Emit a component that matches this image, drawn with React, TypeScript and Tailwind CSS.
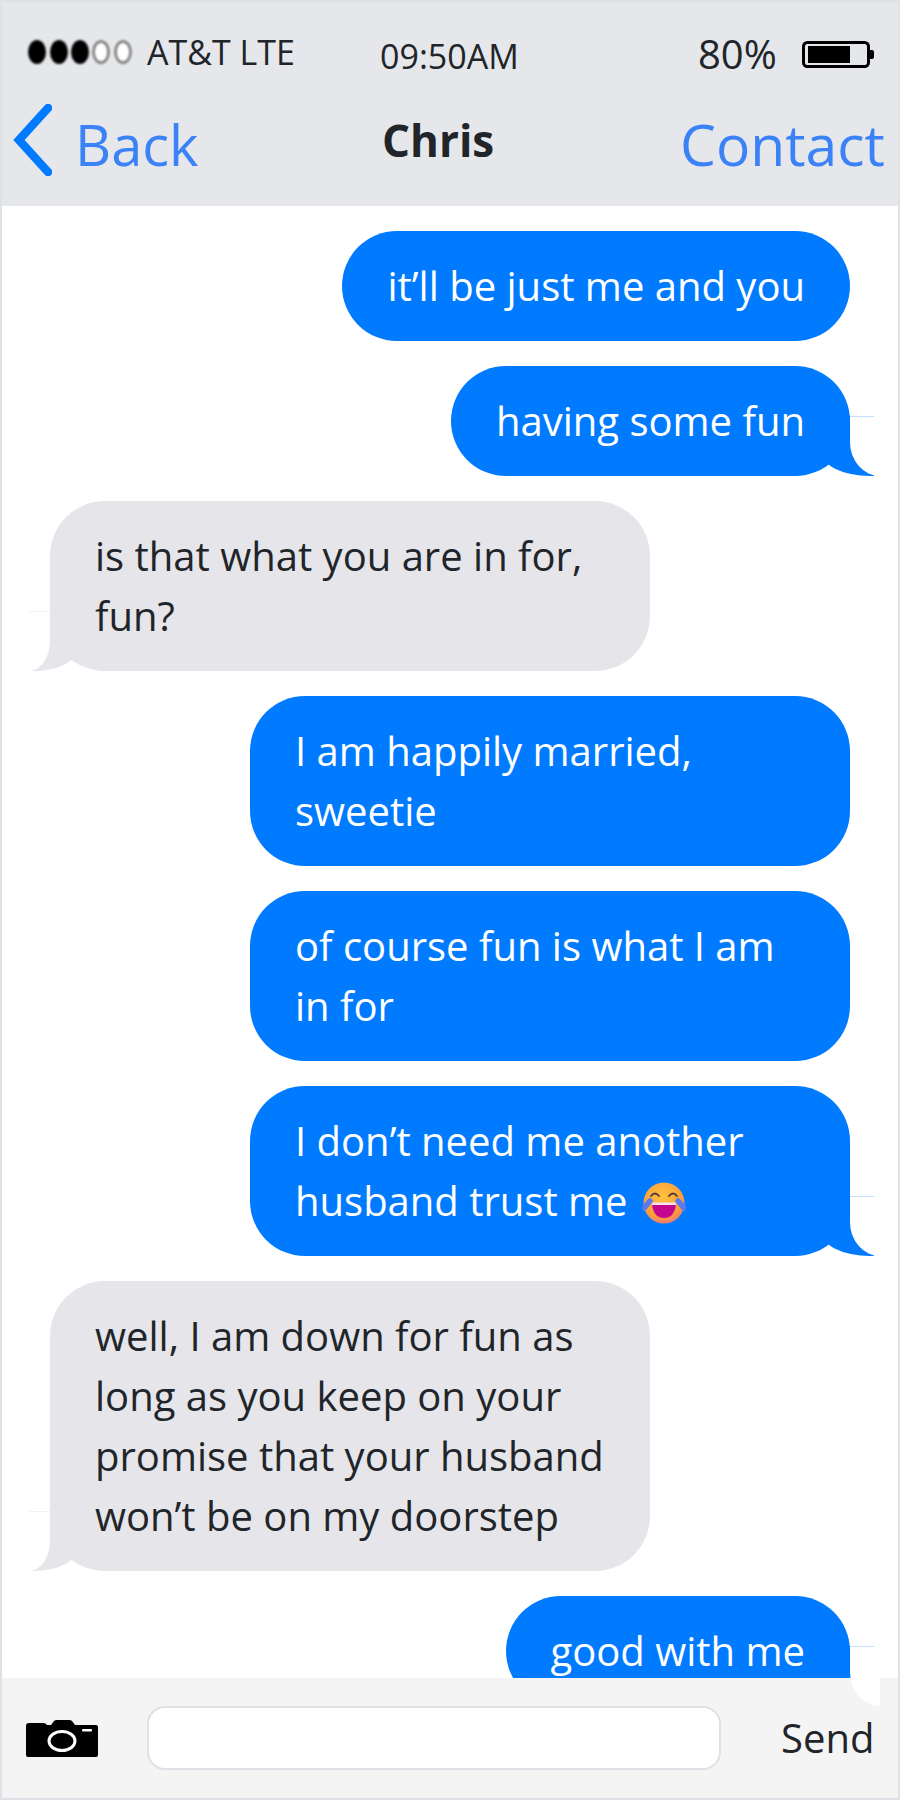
const messages = [
  { from: 'me', text: 'it’ll be just me and you' },
  { from: 'me', text: 'having some fun', tail: true },
  { from: 'them', text: 'is that what you are in for, fun?', tail: true },
  { from: 'me', text: 'I am happily married, sweetie' },
  { from: 'me', text: 'of course fun is what I am in for' },
  { from: 'me', text: 'I don’t need me another husband trust me', emoji: true, tail: true },
  { from: 'them', text: 'well, I am down for fun as long as you keep on your promise that your husband won’t be on my doorstep', tail: true },
  { from: 'me', text: 'good with me', tail: true },
];

function LaughEmoji() {
  return (
    <svg viewBox="0 0 44 42" className="inline-block w-[44px] h-[42px] ml-[14px] align-[-8px]">
      <defs>
        <radialGradient id="face" cx="45%" cy="35%" r="70%">
          <stop offset="0%" stopColor="#fdc33f" />
          <stop offset="70%" stopColor="#f9a03a" />
          <stop offset="100%" stopColor="#f2717f" />
        </radialGradient>
      </defs>
      <circle cx="22" cy="21" r="20.5" fill="url(#face)" />
      <path d="M9 14 q4 -5 8 0 M27 14 q4 -5 8 0" fill="none" stroke="#5b3a3a" strokeWidth="2" strokeLinecap="round" />
      <path d="M10 21 H34 Q33 36 22 36 Q11 36 10 21Z" fill="#c4068f" />
      <path d="M10 20.5 H34 V23 H10Z" fill="#f7e3ef" />
      <path d="M8 19 L2 26" stroke="#5b78ee" strokeWidth="5.5" strokeLinecap="round" />
      <path d="M36 19 L42 26" stroke="#5b78ee" strokeWidth="5.5" strokeLinecap="round" />
    </svg>
  );
}

function Bubble({ from, text, emoji, tail }: { from: string; text: string; emoji?: boolean; tail?: boolean }) {
  const me = from === 'me';
  return (
    <div
      className={`relative max-w-[600px] rounded-[55px] px-[45px] py-[25px] text-[40px] leading-[60px] ${
        me ? 'self-end bg-[#007bff] text-white' : 'self-start bg-[#e5e5ea] text-[#212529]'
      }`}
    >
      <span className="relative z-[1]">
        {text}
        {emoji && <LaughEmoji />}
      </span>
      {tail && me && (
        <>
          <span className="absolute bottom-0 right-[-24px] h-[60px] w-[54px] rounded-bl-[50px_26px] bg-[#007bff]" />
          <span className="absolute bottom-[59px] right-[-24px] h-px w-[24px] bg-[#c4e0ff]" />
          <span className="absolute bottom-0 right-[-30px] z-20 h-[59px] w-[30px] rounded-bl-[30px_34px] bg-white" />
        </>
      )}
      {tail && !me && (
        <>
          <span className="absolute bottom-0 left-[-21px] h-[60px] w-[51px] rounded-br-[46px_26px] bg-[#e5e5ea]" />
          <span className="absolute bottom-[59px] left-[-21px] h-px w-[21px] bg-[#f2f2f5]" />
          <span className="absolute bottom-0 left-[-30px] z-20 h-[59px] w-[30px] rounded-br-[21px_30px] bg-white" />
        </>
      )}
    </div>
  );
}

export default function App() {
  return (
    <div className="flex h-[1800px] w-[900px] flex-col overflow-hidden border-2 border-[#dee2e6] bg-white font-['Open_Sans',sans-serif] text-[#212529]">
      {/* Header */}
      <header className="h-[204px] shrink-0 bg-[#e5e7eb]">
        <div className="flex h-[84px] items-end">
          <div className="flex w-[378px] items-center pb-[12px] pl-[25px]">
            <svg viewBox="0 0 108 26" className="h-[26px] w-[108px] blur-[0.8px]">
              <ellipse cx="10" cy="13" rx="9" ry="12" fill="#000" />
              <ellipse cx="32" cy="13" rx="9" ry="12" fill="#000" />
              <ellipse cx="53" cy="13" rx="9" ry="12" fill="#000" />
              <ellipse cx="74" cy="13" rx="7.5" ry="10.5" fill="#fff" stroke="#777" strokeWidth="2.5" />
              <ellipse cx="96" cy="13" rx="7.5" ry="10.5" fill="#fff" stroke="#777" strokeWidth="2.5" />
            </svg>
            <span className="ml-[12px] text-[34px] leading-[44px]">AT&amp;T LTE</span>
          </div>
          <div className="w-[318px] pb-[8px] text-[34px] leading-[44px]">09:50AM</div>
          <div className="flex items-center pb-[8px]">
            <span className="text-[40px] leading-[48px]">80%</span>
            <svg viewBox="0 0 72 27" className="ml-[25px] h-[27px] w-[72px]">
              <rect x="1.5" y="1.5" width="65" height="24" rx="4" fill="none" stroke="#000" strokeWidth="3" />
              <rect x="6" y="5" width="42" height="17" fill="#000" />
              <path d="M68 9 h2 q2 0 2 2 v5 q0 2 -2 2 h-2z" fill="#000" />
            </svg>
          </div>
        </div>
        <div className="flex items-start">
          <div className="flex w-[380px] items-start">
            <svg viewBox="0 0 40 72" className="ml-[10px] mt-[18px] h-[72px] w-[40px]">
              <path d="M36 4 L7 36 L36 68" fill="none" stroke="#007bff" strokeWidth="8.5" strokeLinecap="round" strokeLinejoin="miter" />
            </svg>
            <span className="ml-[23px] mt-[22px] text-[56px] leading-[72px] text-[#3b82f6]">Back</span>
          </div>
          <span className="w-[298px] pt-[24px] text-[44px] font-bold leading-[60px]">Chris</span>
          <span className="pt-[22px] text-[57px] leading-[72px] text-[#3b82f6]">Contact</span>
        </div>
      </header>

      {/* Messages */}
      <main className="flex min-h-0 flex-1 flex-col gap-[25px] px-[48px] pt-[25px]">
        {messages.map((m) => (
          <Bubble key={m.text} from={m.from} text={m.text} emoji={m.emoji} tail={m.tail} />
        ))}
      </main>

      {/* Footer */}
      <footer className="relative z-10 flex h-[120px] shrink-0 items-center bg-[#f4f4f5]">
        <svg viewBox="0 0 72 37" className="ml-[24px] h-[37px] w-[72px]">
          <path
            d="M3 3 H17 Q20 3 21 5 H25 L28 1 Q29 0 31 0 H43 Q45 0 46 1 L49 5 H70 Q72 5 72 7 V35 Q72 37 70 37 H2 Q0 37 0 35 V6 Q0 3 3 3Z"
            fill="#000"
          />
          <ellipse cx="36" cy="21" rx="13" ry="9.5" fill="none" stroke="#fff" strokeWidth="3" />
          <rect x="56" y="9" width="10" height="2.5" rx="1" fill="#fff" />
        </svg>
        <div className="ml-[49px] h-[64px] w-[574px] rounded-[18px] border-2 border-[#dee2e6] bg-white" />
        <span className="ml-[60px] text-[40px] leading-[48px]">Send</span>
      </footer>
    </div>
  );
}
